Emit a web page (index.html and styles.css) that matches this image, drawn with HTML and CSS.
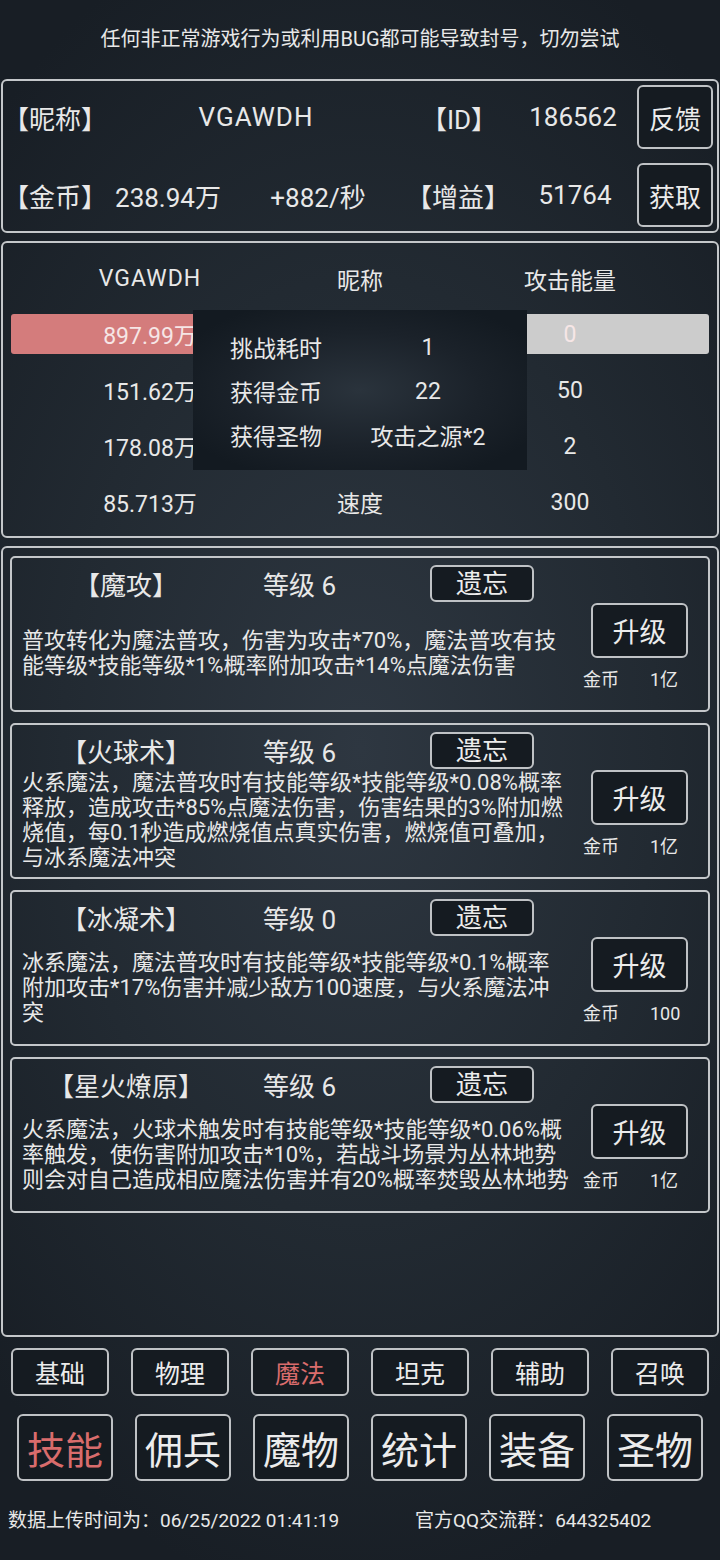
FILE: index.html
```html
<!DOCTYPE html>
<html lang="zh-CN">
<head>
    <meta charset="UTF-8">
    <meta name="viewport" content="width=device-width, initial-scale=1.0">
    <title>技能</title>
    <link rel="stylesheet" href="styles.css">
</head>
<body>
    <div class="notice">任何非正常游戏行为或利用BUG都可能导致封号，切勿尝试</div>

    <div class="box info">
        <div class="info-row row-a">
            <span>【昵称】</span>
            <span class="name">VGAWDH</span>
            <span>【ID】</span>
            <span>186562</span>
            <button class="btn side-btn">反馈</button>
        </div>
        <div class="info-row row-b">
            <span>【金币】</span>
            <span>238.94万</span>
            <span>+882/秒</span>
            <span>【增益】</span>
            <span>51764</span>
            <button class="btn side-btn">获取</button>
        </div>
    </div>

    <div class="box battle">
        <div class="stats head">
            <span class="name">VGAWDH</span>
            <span>昵称</span>
            <span>攻击能量</span>
        </div>
        <div class="stats bar">
            <span>897.99万</span>
            <span></span>
            <span>0</span>
        </div>
        <div class="stats">
            <span>151.62万</span>
            <span></span>
            <span>50</span>
        </div>
        <div class="stats">
            <span>178.08万</span>
            <span></span>
            <span>2</span>
        </div>
        <div class="stats">
            <span>85.713万</span>
            <span>速度</span>
            <span>300</span>
        </div>

        <div class="result">
            <span>挑战耗时</span><span class="val">1</span>
            <span>获得金币</span><span class="val">22</span>
            <span>获得圣物</span><span class="val">攻击之源*2</span>
        </div>
    </div>

    <div class="box skills">
        <div class="card">
            <div class="card-head">
                <span class="title">【魔攻】</span>
                <span class="level">等级 6</span>
                <button class="btn forget">遗忘</button>
            </div>
            <div class="desc">普攻转化为魔法普攻，伤害为攻击*70%，魔法普攻有技<br>能等级*技能等级*1%概率附加攻击*14%点魔法伤害</div>
            <div class="side">
                <button class="btn upgrade">升级</button>
                <div class="cost"><span>金币</span><span>1亿</span></div>
            </div>
        </div>

        <div class="card">
            <div class="card-head">
                <span class="title">【火球术】</span>
                <span class="level">等级 6</span>
                <button class="btn forget">遗忘</button>
            </div>
            <div class="desc">火系魔法，魔法普攻时有技能等级*技能等级*0.08%概率<br>释放，造成攻击*85%点魔法伤害，伤害结果的3%附加燃<br>烧值，每0.1秒造成燃烧值点真实伤害，燃烧值可叠加，<br>与冰系魔法冲突</div>
            <div class="side">
                <button class="btn upgrade">升级</button>
                <div class="cost"><span>金币</span><span>1亿</span></div>
            </div>
        </div>

        <div class="card">
            <div class="card-head">
                <span class="title">【冰凝术】</span>
                <span class="level">等级 0</span>
                <button class="btn forget">遗忘</button>
            </div>
            <div class="desc">冰系魔法，魔法普攻时有技能等级*技能等级*0.1%概率<br>附加攻击*17%伤害并减少敌方100速度，与火系魔法冲<br>突</div>
            <div class="side">
                <button class="btn upgrade">升级</button>
                <div class="cost"><span>金币</span><span>100</span></div>
            </div>
        </div>

        <div class="card">
            <div class="card-head">
                <span class="title">【星火燎原】</span>
                <span class="level">等级 6</span>
                <button class="btn forget">遗忘</button>
            </div>
            <div class="desc">火系魔法，火球术触发时有技能等级*技能等级*0.06%概<br>率触发，使伤害附加攻击*10%，若战斗场景为丛林地势<br>则会对自己造成相应魔法伤害并有20%概率焚毁丛林地势</div>
            <div class="side">
                <button class="btn upgrade">升级</button>
                <div class="cost"><span>金币</span><span>1亿</span></div>
            </div>
        </div>
    </div>

    <div class="tabs">
        <button class="btn tab">基础</button>
        <button class="btn tab">物理</button>
        <button class="btn tab active">魔法</button>
        <button class="btn tab">坦克</button>
        <button class="btn tab">辅助</button>
        <button class="btn tab">召唤</button>
    </div>

    <div class="nav">
        <button class="btn nav-btn active">技能</button>
        <button class="btn nav-btn">佣兵</button>
        <button class="btn nav-btn">魔物</button>
        <button class="btn nav-btn">统计</button>
        <button class="btn nav-btn">装备</button>
        <button class="btn nav-btn">圣物</button>
    </div>

    <div class="footer">
        <span class="upload">数据上传时间为：06/25/2022 01:41:19</span>
        <span>官方QQ交流群：644325402</span>
    </div>
</body>
</html>
```

FILE: styles.css
```css
body {
    margin: 0;
    width: 720px;
    height: 1560px;
    overflow: hidden;
    font-family: Roboto, "Noto Sans CJK SC", sans-serif;
    color: #e8e8e8;
    background: radial-gradient(ellipse 75% 55% at 50% 48%, #2e3741 0%, #222a32 55%, #181e25 100%);
}
.notice {
    height: 79px;
    line-height: 79px;
    text-align: center;
    font-size: 20px;
}
.box {
    box-sizing: border-box;
    margin: 0 1px;
    border: 2px solid #c4c7ca;
    border-radius: 6px;
}
.btn {
    box-sizing: border-box;
    padding: 0;
    font-family: inherit;
    color: #ececec;
    background: #151b21;
    border: 2px solid #bfc2c5;
    border-radius: 6px;
}
.name {
    letter-spacing: 1px;
}

/* player info */
.info {
    height: 154px;
    padding: 4px 4px 4px 0;
}
.info-row {
    display: grid;
    height: 64px;
    align-items: center;
    text-align: center;
    font-size: 26px;
}
.row-a {
    grid-template-columns: 100px 306px 100px 128px 76px;
    margin-bottom: 14px;
}
.row-b {
    grid-template-columns: 100px 130px 170px 110px 124px 76px;
}
.side-btn {
    width: 76px;
    height: 64px;
    font-size: 26px;
}

/* battle */
.battle {
    position: relative;
    height: 297px;
    margin-top: 8px;
    padding-bottom: 6px;
}
.stats {
    display: grid;
    grid-template-columns: 210px 210px 210px;
    justify-content: center;
    align-items: center;
    text-align: center;
    height: 56px;
    font-size: 23px;
}
.stats.head {
    height: 71px;
}
.stats.bar {
    height: 40px;
    margin: 0 8px 8px;
    border-radius: 3px;
    background: linear-gradient(to right, #d47c7c 50%, #cccccc 50%);
    color: #f6e6e6;
}
.result {
    position: absolute;
    top: 67px;
    left: 190px;
    width: 334px;
    height: 160px;
    box-sizing: border-box;
    padding: 15px 0 13px 37px;
    display: grid;
    grid-template-columns: 123px 150px;
    grid-auto-rows: 44px;
    align-items: center;
    font-size: 23px;
    background: radial-gradient(ellipse 60% 60% at 50% 50%, #2a333c 0%, #1b222a 60%, #131a21 100%);
}
.result .val {
    text-align: center;
}

/* skills */
.skills {
    height: 791px;
    margin-top: 8px;
    padding: 8px 7px;
    display: flex;
    flex-direction: column;
    gap: 11px;
}
.card {
    box-sizing: border-box;
    height: 156px;
    border: 2px solid #c4c7ca;
    border-radius: 5px;
    display: grid;
    grid-template-columns: 558px 1fr;
    grid-template-rows: 44px 1fr;
}
.card-head {
    grid-column: 1 / -1;
    display: flex;
    align-items: center;
    padding-top: 7px;
    font-size: 26px;
}
.title {
    width: 228px;
    text-align: center;
}
.level {
    width: 167px;
    margin-left: 23px;
}
.forget {
    width: 104px;
    height: 37px;
    font-size: 26px;
    line-height: 1;
}
.desc {
    display: flex;
    align-items: center;
    padding: 0 0 6px 10px;
    font-size: 22px;
    line-height: 25px;
    white-space: nowrap;
}
.side {
    padding-left: 21px;
    padding-top: 1px;
}
.upgrade {
    width: 97px;
    height: 55px;
    font-size: 27px;
}
.cost {
    display: flex;
    gap: 31px;
    margin: 10px 0 0 -8px;
    font-size: 18px;
    line-height: 24px;
}

/* tabs and nav */
.tabs, .nav {
    display: flex;
    justify-content: center;
    gap: 22px;
}
.tabs {
    margin-top: 11px;
}
.tab {
    width: 98px;
    height: 48px;
    font-size: 25px;
}
.nav {
    margin-top: 18px;
}
.nav-btn {
    width: 96px;
    height: 67px;
    font-size: 38px;
}
.btn.active {
    color: #d96c6c;
}
.footer {
    display: flex;
    margin-top: 25px;
    padding-left: 8px;
    font-size: 19px;
    line-height: 30px;
}
.upload {
    width: 407px;
}
```
